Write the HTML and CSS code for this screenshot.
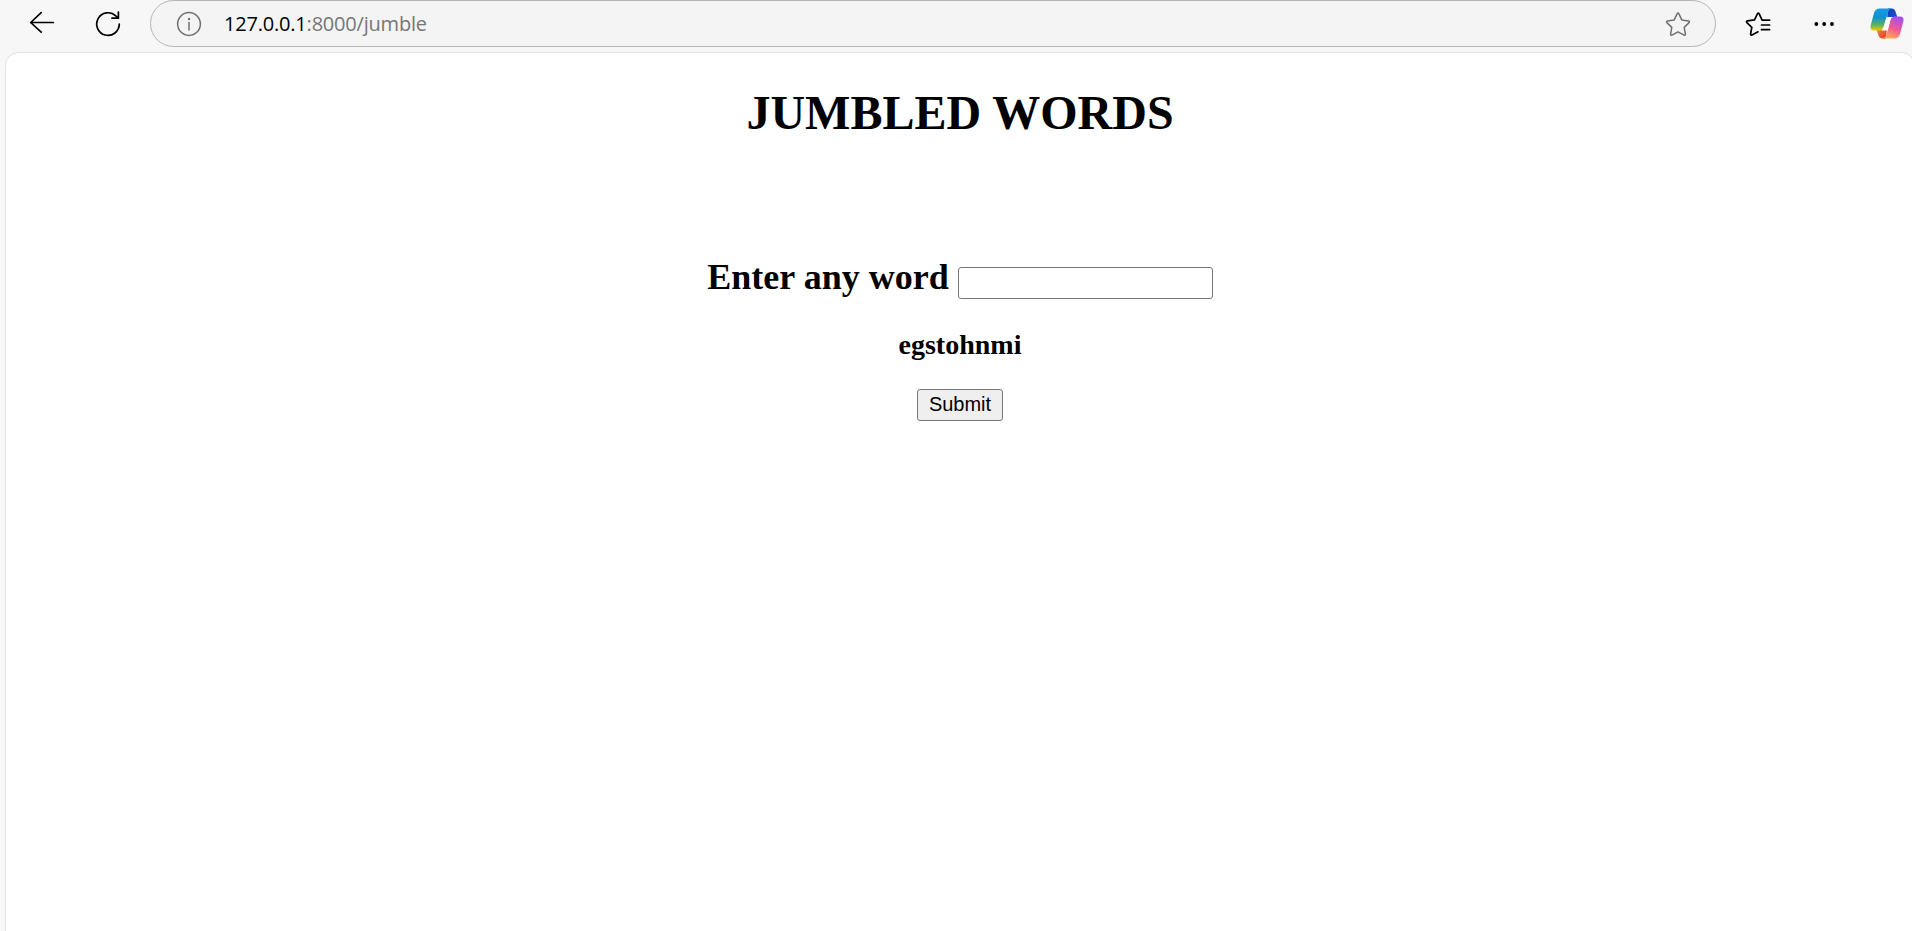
FILE: index.html
```
<!DOCTYPE html>
<html lang="en">
<head>
<meta charset="utf-8">
<title>Jumbled Words</title>
<link rel="stylesheet" href="styles.css">
</head>
<body>
<header class="toolbar">
  <svg class="icon back" width="26" height="24" viewBox="0 0 26 24"><path d="M24.300 11.500H1.700M12.200 1.700L1.700 11.500l10.500 9.700"/></svg>
  <svg class="icon reload" width="26" height="26" viewBox="0 0 26 26"><path d="M24.300 13A11.300 11.300 0 1 1 20.800 4.900L23 6.800M23.400 1v6.200H17"/></svg>
  <div class="address">
    <svg class="icon info" width="26" height="26" viewBox="0 0 26 26"><circle cx="13" cy="13" r="11.400"/><path d="M13 11.500v7.500"/><circle class="dot" cx="13" cy="8" r="1.200"/></svg>
    <span class="url"><span class="host">127.0.0.1</span><span class="path">:8000/jumble</span></span>
    <svg class="icon star" width="26" height="26" viewBox="0 0 26 26"><path d="M12.200 2.700q.8-1.200 1.600 0l3 6.200 6.700 1q1.600.4.600 1.700l-4.900 4.800 1.200 6.700q.1 1.500-1.400 1L13 20.900l-6 3.200q-1.500.5-1.400-1l1.200-6.700-4.900-4.800q-1-1.300.6-1.700l6.700-1z"/></svg>
  </div>
  <svg class="icon favorites" width="26" height="26" viewBox="0 0 26 26"><path d="M24.600 9.200h-7.500l-3-6.500q-.8-1.300-1.600 0L9.500 8.900l-7 1q-1.600.4-.6 1.700l4.900 4.800L5.600 23q0 1.500 1.400 1l6-3.200M16.500 14h8.100M16.500 18.700h8.100"/></svg>
  <svg class="menu" width="20" height="6" viewBox="0 0 20 6"><circle cx="2.300" cy="3" r="1.900"/><circle cx="10.200" cy="3" r="1.900"/><circle cx="18" cy="3" r="1.900"/></svg>
  <svg class="copilot" width="34" height="31" viewBox="0 0 34 31">
    <defs>
      <linearGradient id="blue" x1="0" y1="0" x2="0" y2="1"><stop offset="0" stop-color="#139de5"/><stop offset=".4" stop-color="#0f91cf"/><stop offset=".75" stop-color="#5db45d"/><stop offset="1" stop-color="#efcc00"/></linearGradient>
      <linearGradient id="navy" x1="0" y1="0" x2="1" y2="1"><stop offset="0" stop-color="#103ca8"/><stop offset="1" stop-color="#2052df"/></linearGradient>
      <linearGradient id="pink" x1=".7" y1="0" x2=".3" y2="1"><stop offset="0" stop-color="#a450ef"/><stop offset=".5" stop-color="#ed5798"/><stop offset="1" stop-color="#ffac4d"/></linearGradient>
      <linearGradient id="red" x1="0" y1="0" x2="1" y2="1"><stop offset="0" stop-color="#f5933b"/><stop offset="1" stop-color="#df3030"/></linearGradient>
    </defs>
    <path fill="url(#navy)" d="M18 .5h3.500q3 0 4 3l1.800 5.500H21q-3 0-4 1.500z"/>
    <path fill="url(#red)" d="M16 30.500h-3.500q-3 0-4-3L6.500 22H13q3.500 0 4-2z"/>
    <path fill="url(#blue)" d="M9.500.5H22q-3 .5-4 4L13.500 19q-1 3.500-4.500 3.500H4Q-.5 22.500.8 17L4 5Q5.300.5 9.500.5z"/>
    <path fill="url(#pink)" d="M24.500 30.500H12.500q3-.5 4-4L20.500 12q1-3.500 4.500-3.500h5q4.500 0 3.200 5.500L30 26q-1.300 4.500-5.500 4.500z"/>
    <path fill="#fff" d="M17 9h5q-1.200 1-1.600 3l-2.600 9.500q-.3 1-1 1h-5q1.200-1 1.700-3z"/>
  </svg>
</header>
<main class="page">
  <h1 class="title">JUMBLED WORDS</h1>
  <form class="jumble">
    <h2 class="prompt"><label for="word">Enter any word</label><input class="word" id="word" type="text"></h2>
    <h3 class="result">egstohnmi</h3>
    <button class="submit" type="button">Submit</button>
  </form>
</main>
</body>
</html>
```
FILE: styles.css
```
* { box-sizing: border-box; }
body { margin: 0; height: 931px; display: flex; flex-direction: column; overflow: hidden; background: #f7f7f7; color: #000; font-family: "Liberation Serif", "Times New Roman", serif; }
svg { display: block; flex: none; }
.toolbar { display: flex; align-items: center; height: 47px; padding: 0 8px 0 29px; flex: none; }
.icon { fill: none; stroke: #000; stroke-width: 1.7; stroke-linecap: round; stroke-linejoin: round; }
.back { margin-bottom: 2px; }
.reload { margin: 0 29px 0 40px; }
.address { display: flex; align-items: center; width: 1566px; height: 47px; padding: 0 24px 0 25px; border: 1px solid #b5b5b5; border-radius: 24px; background: #f4f4f4; }
.info, .star { stroke: #707070; stroke-width: 1.500; }
.dot { fill: #707070; stroke: none; }
.url { margin-left: 22px; flex: 1; font: 20px "Open Sans", "Noto Sans", sans-serif; white-space: nowrap; letter-spacing: -.2px; }
.path { color: #767676; }
.favorites { margin-left: 29px; }
.menu { margin-left: 43px; }
.copilot { margin-left: auto; }
.page { flex: 1; margin: 5px -3px 0 5px; border: 1px solid #e5e5e5; border-bottom: 0; border-radius: 14px 14px 0 0; background: #fff; text-align: center; }
.title { margin: 32px 0 0; font-size: 48px; line-height: 55px; }
.jumble { display: flex; flex-direction: column; align-items: center; margin-top: 116px; }
.prompt { display: flex; align-items: flex-start; gap: 9px; height: 44px; margin: 0; font-size: 36px; line-height: 42px; }
.word { width: 255px; height: 32px; margin-top: 11px; padding: 1px 3px; border: 1px solid #767676; border-radius: 3px; font: 20px "Liberation Sans", Arial, sans-serif; background: #fff; }
.result { margin: 29px 0 0; font-size: 28px; line-height: 32px; }
.submit { width: 86px; height: 32px; margin-top: 28px; padding: 0 0 2px; border: 1px solid #767676; border-radius: 3px; background: #efefef; color: #000; font: 20px "Liberation Sans", Arial, sans-serif; }
```
